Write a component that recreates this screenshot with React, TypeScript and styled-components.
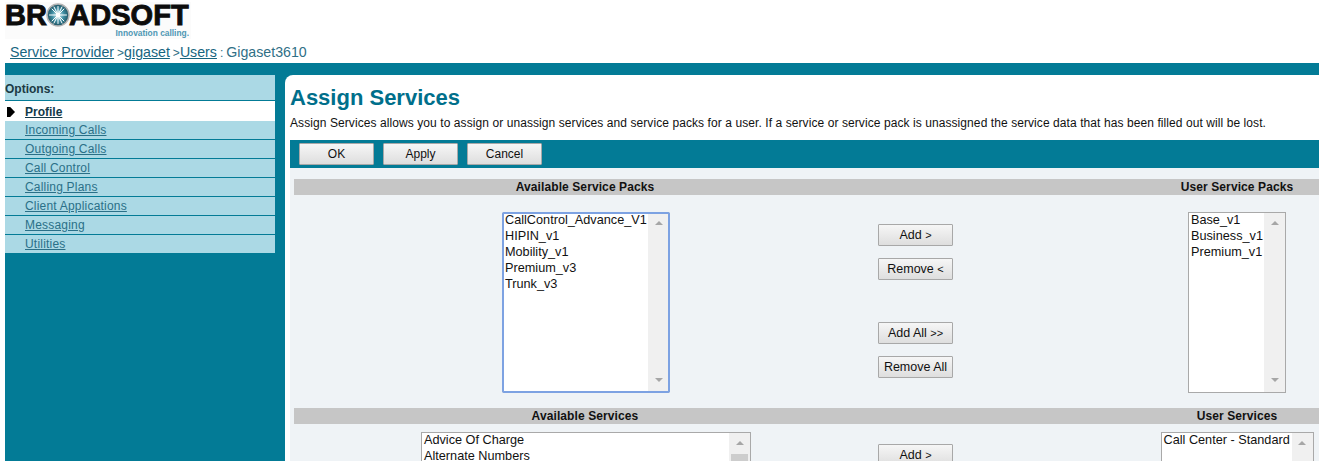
import React from 'react';
import styled, { createGlobalStyle } from 'styled-components';

const teal = '#037b96';
const lightBlue = '#abd9e5';

const GlobalStyle = createGlobalStyle`
  html, body {
    margin: 0;
    padding: 0;
    height: 461px;
    overflow: hidden;
    background: #fff;
    font-family: "Liberation Sans", Arial, sans-serif;
  }
`;

const Page = styled.div`
  height: 461px;
  overflow: hidden;
  padding-left: 5px;
`;

const LogoRow = styled.div`
  height: 39px;
  padding-top: 2px;
  box-sizing: border-box;
  display: flex;
`;

const Logo = styled.div`
  width: 186px;
  display: flex;
  flex-direction: column;
  background: #fbfbfb;
`;

const LogoWord = styled.div`
  height: 26px;
  display: flex;
  align-items: center;
  font-weight: 700;
  font-size: 29px;
  line-height: 26px;
  letter-spacing: 0.1px;
  color: #0c0c0c;
  -webkit-text-stroke: 0.9px #0c0c0c;
`;

const LogoStar = styled.svg`
  flex: none;
  margin: 0 -1px 0 -1px;
`;

const LogoTag = styled.div`
  font-size: 8.4px;
  line-height: 9px;
  font-weight: 700;
  color: #4f97b4;
  text-align: right;
  padding-right: 2px;
  margin-top: 1px;
`;

const Crumbs = styled.div`
  height: 24px;
  padding-left: 5px;
  font-size: 14.2px;
  line-height: 26px;
  color: #2f6f86;
  a {
    color: #17657f;
    text-decoration: underline;
  }
`;

const Sep = styled.span`
  font-size: 12px;
  margin-left: 3px;
`;

const Colon = styled(Sep)`
  margin-right: 3px;
`;

const Body = styled.div`
  background: ${teal};
  padding-top: 12px;
  display: flex;
  height: 398px;
`;

const Sidebar = styled.div`
  width: 270px;
  margin-right: 10px;
  flex: none;
  align-self: flex-start;
  background: ${lightBlue};
`;

const OptionsHead = styled.div`
  height: 25px;
  font-size: 12px;
  font-weight: 700;
  line-height: 29px;
  color: #1c3a44;
  border-bottom: 1px solid ${teal};
`;

const NavItem = styled.div<{ $active?: boolean }>`
  position: relative;
  height: ${p => (p.$active ? 20 : 18)}px;
  padding-left: 20px;
  font-size: 12px;
  line-height: ${p => (p.$active ? 23 : 18)}px;
  letter-spacing: ${p => (p.$active ? 0 : 0.2)}px;
  border-bottom: ${p => (p.$active ? 'none' : `1px solid ${teal}`)};
  background: ${p => (p.$active ? '#fff' : lightBlue)};
  color: ${p => (p.$active ? '#123a4a' : '#2a7088')};
  font-weight: ${p => (p.$active ? 700 : 400)};
  text-decoration: underline;
  &:last-child {
    border-bottom: none;
  }
`;

const Marker = styled.span`
  position: absolute;
  left: 2px;
  top: 6px;
  width: 8px;
  height: 10px;
  background: #000;
  clip-path: polygon(0 0, 40% 0, 100% 50%, 40% 100%, 0 100%);
`;

const Main = styled.div`
  flex: 1;
  min-width: 0;
  background: #fff;
  border-top-left-radius: 8px;
  display: flex;
  flex-direction: column;
  padding-left: 5px;
`;

const Title = styled.h1`
  margin: 11px 0 0;
  font-size: 22px;
  line-height: 24px;
  font-weight: 700;
  color: #006f8b;
`;

const Description = styled.p`
  margin: 5px 0 0;
  font-size: 12px;
  line-height: 16px;
  letter-spacing: 0.08px;
  color: #111;
`;

const Toolbar = styled.div`
  margin-top: 9px;
  height: 28px;
  flex: none;
  background: ${teal};
  display: flex;
  align-items: flex-start;
  gap: 9px;
  padding: 3px 0 0 9px;
  box-sizing: border-box;
`;

const Btn = styled.button`
  width: 75px;
  height: 22px;
  padding: 0;
  font-family: inherit;
  font-size: 12px;
  color: #111;
  border: 1px solid #a8a8a8;
  border-radius: 1px;
  background: linear-gradient(#f6f6f6, #dedede);
`;

const Content = styled.div`
  flex: 1;
  background: #eff3f6;
  padding: 11px 0 0 4px;
`;

const Band = styled.div`
  height: 16px;
  background: #c6c6c6;
  display: grid;
  grid-template-columns: 582px 279px 164px;
`;

const BandLabel = styled.div<{ $col: number }>`
  grid-column: ${p => p.$col};
  text-align: center;
  font-size: 12px;
  line-height: 16px;
  font-weight: 700;
  letter-spacing: 0.1px;
  color: #111;
`;

const Row = styled.div<{ $height: number; $top: number }>`
  display: grid;
  grid-template-columns: 584px 277px 164px;
  box-sizing: border-box;
  height: ${p => p.$height}px;
  padding-top: ${p => p.$top}px;
`;

const ListCell = styled.div`
  display: flex;
  justify-content: center;
  align-items: flex-start;
`;

const ListBox = styled.div<{ $w: number; $h: number; $focus?: boolean }>`
  width: ${p => p.$w}px;
  height: ${p => p.$h}px;
  flex: none;
  box-sizing: border-box;
  background: #fff;
  display: flex;
  border: 1px solid #a9a9a9;
  ${p => p.$focus && 'outline: 2px solid #7da2e2; outline-offset: -2px; border-radius: 2px;'}
`;

const Options = styled.div`
  flex: 1;
  min-width: 0;
  margin-top: -1px;
  padding-left: 2px;
  font-size: 12.7px;
  line-height: 16px;
  color: #111;
  white-space: nowrap;
  overflow: hidden;
`;

const Track = styled.div`
  width: 21px;
  flex: none;
  background: #f0f0f0;
  display: flex;
  flex-direction: column;
  align-items: center;
  justify-content: flex-start;
  padding: 8px 0 10px;
  box-sizing: border-box;
`;

const Arrow = styled.span<{ $down?: boolean }>`
  width: 0;
  height: 0;
  border-left: 4px solid transparent;
  border-right: 4px solid transparent;
  ${p => (p.$down ? 'margin-top: auto; border-top: 4px solid #a6a6a6;' : 'border-bottom: 4px solid #a6a6a6;')}
`;

const Thumb = styled.span`
  width: 17px;
  height: 40px;
  margin-top: 9px;
  background: #cdcdcd;
`;

const ButtonColumn = styled.div`
  display: flex;
  flex-direction: column;
  align-items: flex-start;
`;

const SideBtn = styled(Btn)<{ $gap?: number }>`
  margin-top: ${p => p.$gap ?? 0}px;
  font-size: 12.5px;
`;

const Small = styled.span`
  font-size: 11px;
`;

type ListProps = { w: number; h: number; items: string[]; focus?: boolean; thumb?: boolean };

const List: React.FC<ListProps> = ({ w, h, items, focus, thumb }) => (
  <ListCell>
    <ListBox $w={w} $h={h} $focus={focus}>
      <Options>
        {items.map(i => (
          <div key={i}>{i}</div>
        ))}
      </Options>
      <Track>
        <Arrow />
        {thumb && <Thumb />}
        <Arrow $down />
      </Track>
    </ListBox>
  </ListCell>
);

const nav = ['Incoming Calls', 'Outgoing Calls', 'Call Control', 'Calling Plans', 'Client Applications', 'Messaging', 'Utilities'];

const App: React.FC = () => (
  <Page>
    <GlobalStyle />
    <LogoRow>
      <Logo>
        <LogoWord>
          BR
          <LogoStar width="24" height="26" viewBox="0 0 24 26">
            <defs>
              <radialGradient id="starGlow">
                <stop offset="0%" stopColor="#d8f2f7" />
                <stop offset="55%" stopColor="#3f8ea3" />
                <stop offset="100%" stopColor="#1d4f5e" />
              </radialGradient>
            </defs>
            <circle cx="12" cy="13" r="11" fill="url(#starGlow)" stroke="#b5b5b5" strokeWidth="1.5" />
            <g stroke="#fff" strokeWidth="1" strokeLinecap="round">
              <path d="M12 4.5v17M3.5 13h17M6 7l12 12M18 7L6 19M8 4.9l8 16.2M16 4.9L8 21.1" />
            </g>
            <circle cx="12" cy="13" r="2.2" fill="#fff" />
          </LogoStar>
          ADSOFT
        </LogoWord>
        <LogoTag>Innovation calling.</LogoTag>
      </Logo>
    </LogoRow>
    <Crumbs>
      <a>Service Provider</a>
      <Sep>&gt;</Sep>
      <a>gigaset</a>
      <Sep>&gt;</Sep>
      <a>Users</a>
      <Colon>:</Colon>Gigaset3610
    </Crumbs>
    <Body>
      <Sidebar>
        <OptionsHead>Options:</OptionsHead>
        <NavItem $active>
          <Marker />
          Profile
        </NavItem>
        {nav.map(n => (
          <NavItem key={n}>{n}</NavItem>
        ))}
      </Sidebar>
      <Main>
        <Title>Assign Services</Title>
        <Description>
          Assign Services allows you to assign or unassign services and service packs for a user. If a service or service pack is unassigned the service data that has been filled out will be lost.
        </Description>
        <Toolbar>
          <Btn>OK</Btn>
          <Btn>Apply</Btn>
          <Btn>Cancel</Btn>
        </Toolbar>
        <Content>
          <Band>
            <BandLabel $col={1}>Available Service Packs</BandLabel>
            <BandLabel $col={3}>User Service Packs</BandLabel>
          </Band>
          <Row $height={213} $top={17}>
            <List w={168} h={181} focus items={['CallControl_Advance_V1', 'HIPIN_v1', 'Mobility_v1', 'Premium_v3', 'Trunk_v3']} />
            <ButtonColumn>
              <SideBtn $gap={12}>
                Add <Small>&gt;</Small>
              </SideBtn>
              <SideBtn $gap={12}>
                Remove <Small>&lt;</Small>
              </SideBtn>
              <SideBtn $gap={42}>
                Add All <Small>&gt;&gt;</Small>
              </SideBtn>
              <SideBtn $gap={12}>Remove All</SideBtn>
            </ButtonColumn>
            <List w={98} h={181} items={['Base_v1', 'Business_v1', 'Premium_v1']} />
          </Row>
          <Band>
            <BandLabel $col={1}>Available Services</BandLabel>
            <BandLabel $col={3}>User Services</BandLabel>
          </Band>
          <Row $height={60} $top={8}>
            <List w={330} h={180} thumb items={['Advice Of Charge', 'Alternate Numbers']} />
            <ButtonColumn>
              <SideBtn $gap={12}>
                Add <Small>&gt;</Small>
              </SideBtn>
            </ButtonColumn>
            <List w={153} h={180} items={['Call Center - Standard']} />
          </Row>
        </Content>
      </Main>
    </Body>
  </Page>
);

export default App;
